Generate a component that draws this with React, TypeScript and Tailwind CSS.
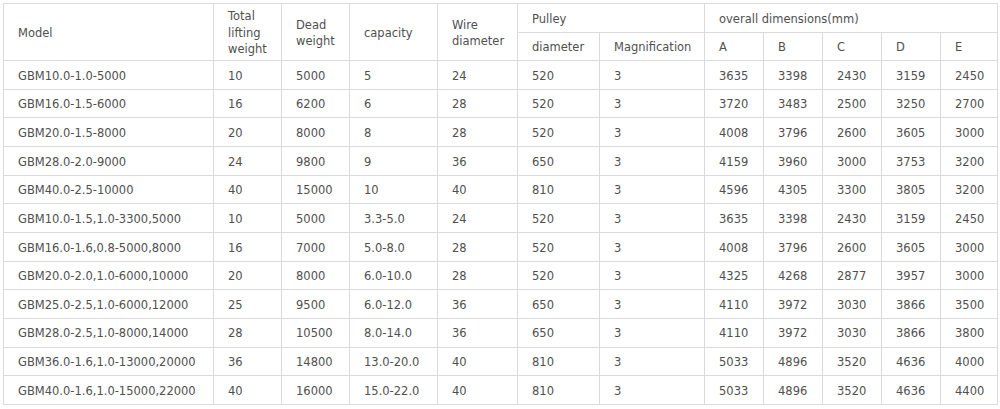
import React from "react";

const rows: string[][] = [
  ["GBM10.0-1.0-5000", "10", "5000", "5", "24", "520", "3", "3635", "3398", "2430", "3159", "2450"],
  ["GBM16.0-1.5-6000", "16", "6200", "6", "28", "520", "3", "3720", "3483", "2500", "3250", "2700"],
  ["GBM20.0-1.5-8000", "20", "8000", "8", "28", "520", "3", "4008", "3796", "2600", "3605", "3000"],
  ["GBM28.0-2.0-9000", "24", "9800", "9", "36", "650", "3", "4159", "3960", "3000", "3753", "3200"],
  ["GBM40.0-2.5-10000", "40", "15000", "10", "40", "810", "3", "4596", "4305", "3300", "3805", "3200"],
  ["GBM10.0-1.5,1.0-3300,5000", "10", "5000", "3.3-5.0", "24", "520", "3", "3635", "3398", "2430", "3159", "2450"],
  ["GBM16.0-1.6,0.8-5000,8000", "16", "7000", "5.0-8.0", "28", "520", "3", "4008", "3796", "2600", "3605", "3000"],
  ["GBM20.0-2.0,1.0-6000,10000", "20", "8000", "6.0-10.0", "28", "520", "3", "4325", "4268", "2877", "3957", "3000"],
  ["GBM25.0-2.5,1.0-6000,12000", "25", "9500", "6.0-12.0", "36", "650", "3", "4110", "3972", "3030", "3866", "3500"],
  ["GBM28.0-2.5,1.0-8000,14000", "28", "10500", "8.0-14.0", "36", "650", "3", "4110", "3972", "3030", "3866", "3800"],
  ["GBM36.0-1.6,1.0-13000,20000", "36", "14800", "13.0-20.0", "40", "810", "3", "5033", "4896", "3520", "4636", "4000"],
  ["GBM40.0-1.6,1.0-15000,22000", "40", "16000", "15.0-22.0", "40", "810", "3", "5033", "4896", "3520", "4636", "4400"],
];

const widths = [210, 68, 68, 88, 80, 82, 105, 59, 59, 59, 59, 57];

const cell = "border border-[#dadada] pl-[14px] pr-1 pt-[2px] align-middle text-left font-normal";

export default function App() {
  return (
    <div className="w-[1000px] h-[409px] bg-white pt-[3px] pl-[3px]" style={{ fontFamily: '"DejaVu Sans", Verdana, sans-serif' }}>
      <table className="table-fixed border-collapse w-[994px] text-[11.5px] leading-[16.5px] text-[#505050]">
        <colgroup>
          {widths.map((w, i) => (
            <col key={i} style={{ width: w }} />
          ))}
        </colgroup>
        <thead>
          <tr className="h-[29px]">
            <th rowSpan={2} className={cell}>Model</th>
            <th rowSpan={2} className={cell}>Total<br />lifting<br />weight</th>
            <th rowSpan={2} className={cell}>Dead<br />weight</th>
            <th rowSpan={2} className={cell}>capacity</th>
            <th rowSpan={2} className={cell}>Wire<br />diameter</th>
            <th colSpan={2} className={cell}>Pulley</th>
            <th colSpan={5} className={cell}>overall dimensions(mm)</th>
          </tr>
          <tr className="h-[28px]">
            <th className={cell}>diameter</th>
            <th className={cell}>Magnification</th>
            <th className={cell}>A</th>
            <th className={cell}>B</th>
            <th className={cell}>C</th>
            <th className={cell}>D</th>
            <th className={cell}>E</th>
          </tr>
        </thead>
        <tbody>
          {rows.map((r, i) => (
            <tr key={i} className="h-[28.67px]">
              {r.map((c, j) => (
                <td key={j} className={cell}>{c}</td>
              ))}
            </tr>
          ))}
        </tbody>
      </table>
    </div>
  );
}
